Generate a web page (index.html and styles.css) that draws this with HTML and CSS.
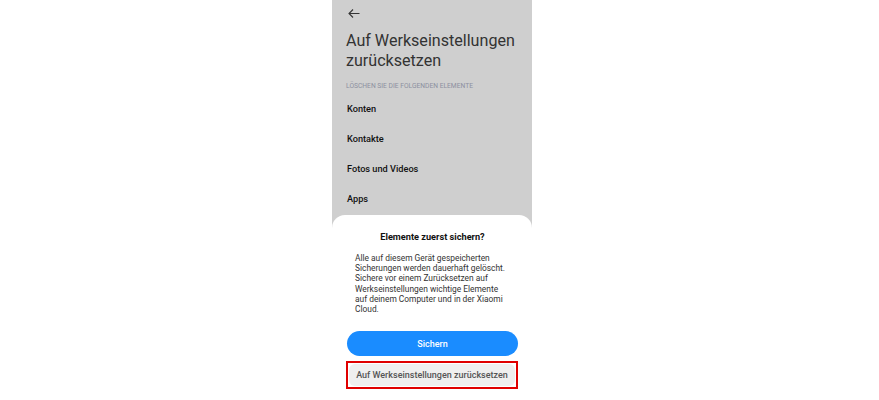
FILE: index.html
```html
<!DOCTYPE html>
<html lang="de">
<head>
<meta charset="utf-8">
<link rel="stylesheet" href="styles.css">
</head>
<body>
<div class="phone">
  <div class="top">
    <svg class="back" width="12" height="10" viewBox="0 0 12 10"><path d="M11.5 5H1M5 1L1 5l4 4" fill="none" stroke="#333" stroke-width="1.1"/></svg>
    <h1 class="title">Auf Werkseinstellungen zurücksetzen</h1>
    <div class="sub">LÖSCHEN SIE DIE FOLGENDEN ELEMENTE</div>
    <ul class="list">
      <li>Konten</li>
      <li>Kontakte</li>
      <li>Fotos und Videos</li>
      <li>Apps</li>
    </ul>
  </div>
  <div class="sheet">
    <div class="sheet-title">Elemente zuerst sichern?</div>
    <p class="sheet-body">Alle auf diesem Gerät gespeicherten Sicherungen werden dauerhaft gelöscht. Sichere vor einem Zurücksetzen auf Werkseinstellungen wichtige Elemente auf deinem Computer und in der Xiaomi Cloud.</p>
    <button class="btn primary">Sichern</button>
    <div class="highlight"><button class="btn secondary">Auf Werkseinstellungen zurücksetzen</button></div>
  </div>
</div>
</body>
</html>
```
FILE: styles.css
```css
html, body { margin: 0; padding: 0; background: #fff; }
body { font-family: Roboto, "Noto Sans", sans-serif; }
.phone {
  width: 200px;
  height: 400px;
  margin-left: 332px;
  background: #cfcfcf;
  display: flex;
  flex-direction: column;
}
.top { padding: 8px 0 0 14px; height: 207px; }
.back { display: block; margin-left: 2px; height: 11px; }
.title {
  margin: 12px 0 0 0;
  font-size: 16.1px;
  line-height: 20px;
  font-weight: 400;
  color: #333;
}
.sub {
  margin-top: 10px;
  font-size: 6.7px;
  line-height: 10px;
  color: #8d90a0;
}
.list { list-style: none; margin: 3px 0 0 1px; padding: 0; }
.list li {
  font-size: 9.2px;
  line-height: 30px;
  font-weight: 500;
  color: #111;
  height: 30px;
}
.sheet {
  flex: 1;
  background: #fff;
  border-radius: 13px 13px 0 0;
  padding: 15px 14px 0 15px;
  display: flex;
  flex-direction: column;
}
.sheet-title {
  text-align: center;
  font-size: 9.2px;
  line-height: 14px;
  font-weight: 700;
  color: #111;
}
.sheet-body {
  margin: 9px 8px 0 8px;
  font-size: 8.4px;
  line-height: 10.2px;
  color: #333;
}
.btn {
  display: block;
  width: 100%;
  border: none;
  font-family: inherit;
  font-size: 9px;
  font-weight: 500;
  padding: 0;
}
.primary {
  margin-top: 17px;
  height: 25px;
  border-radius: 13px;
  background: #1a8cff;
  color: #fff;
}
.highlight {
  margin: 5px 0 0 -1px;
  border: 2px solid #e00000;
  padding: 1px;
}
.secondary {
  height: 22px;
  border-radius: 6px;
  background: #efefef;
  color: #555;
}
```
